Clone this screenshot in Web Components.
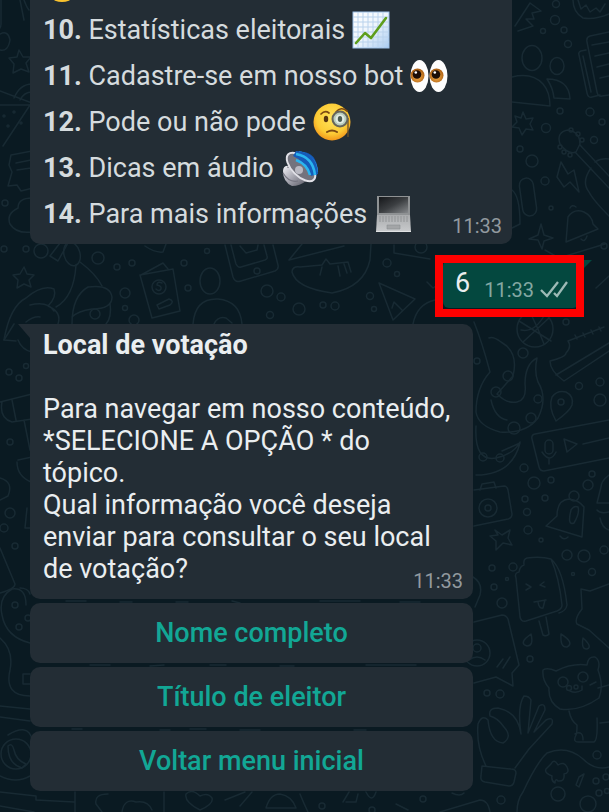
<!DOCTYPE html>
<html lang="pt-BR">
<head>
<meta charset="utf-8">
<meta name="viewport" content="width=device-width, initial-scale=1">
<title>Local de votação</title>
<style>
  body {
    margin: 0;
    background: #0a1a22;
    font-family: Roboto, "Liberation Sans", sans-serif;
    font-size: 27px;
    line-height: 32px;
    color: #eaeef0;
  }
  ul { list-style: none; margin: 0; padding: 0; }
  li {
    display: flex;
    align-items: center;
    gap: 7px;
    height: 46px;
    color: #d5dbde;
    white-space: nowrap;
  }
  p { margin: 0; padding-right: 8px; }
  p:last-child { margin-bottom: 7px; }
  h2 { margin: 0 0 32px; font-size: inherit; line-height: inherit; font-weight: 700; }
</style>
</head>
<body>
<chat-screen>
  <chat-bubble class="menu" time="11:33">
    <ul>
      <li><chat-emoji name="face"></chat-emoji></li>
      <li><span><b>10.</b> Estatísticas eleitorais</span><chat-emoji name="chart"></chat-emoji></li>
      <li><span><b>11.</b> Cadastre-se em nosso bot</span><chat-emoji name="eyes"></chat-emoji></li>
      <li><span><b>12.</b> Pode ou não pode</span><chat-emoji name="monocle"></chat-emoji></li>
      <li><span><b>13.</b> Dicas em áudio</span><chat-emoji name="speaker"></chat-emoji></li>
      <li><span><b>14.</b> Para mais informações</span><chat-emoji name="laptop"></chat-emoji></li>
    </ul>
  </chat-bubble>

  <chat-reply time="11:33" marked>6</chat-reply>

  <chat-options>
    <chat-bubble time="11:33" tail>
      <h2>Local de votação</h2>
      <p>Para navegar em nosso conteúdo, *SELECIONE A OPÇÃO * do tópico.</p>
      <p>Qual informação você deseja enviar para consultar o seu local de votação?</p>
    </chat-bubble>
    <chat-option>Nome completo</chat-option>
    <chat-option>Título de eleitor</chat-option>
    <chat-option>Voltar menu inicial</chat-option>
  </chat-options>
</chat-screen>

<script>
// ── Emoji artwork, all on a 38x38 grid ────────────────────────────────────────

const EMOJI = {
  face: `
    <circle cx="19" cy="19" r="18" fill="#f9c22e"/>
    <path d="M11 24q8 6 16 0" fill="none" stroke="#6b3d12" stroke-width="2"/>`,

  chart: `
    <defs><linearGradient id="g" x1="0" y1="0" x2="1" y2="1">
      <stop offset="0" stop-color="#fff"/><stop offset=".5" stop-color="#eef5fc"/><stop offset="1" stop-color="#a9cbf0"/>
    </linearGradient></defs>
    <rect x="1" y="1" width="36" height="36" fill="url(#g)" stroke="#9cc0e8"/>
    <path d="M6 1v36M11 1v36M16 1v36M21 1v36M26 1v36M31 1v36M1 6h36M1 11h36M1 16h36M1 21h36M1 26h36M1 31h36" stroke="#b9d2ec" fill="none"/>
    <path d="M4 32L13 22L19 27L34 7" fill="none" stroke="#5e9e1c" stroke-width="2.6" stroke-linejoin="round" stroke-linecap="round"/>`,

  eyes: `
    <defs><radialGradient id="g" cx=".5" cy=".6" r=".6">
      <stop offset="0" stop-color="#f6b04a"/><stop offset="1" stop-color="#a85b10"/>
    </radialGradient></defs>
    <ellipse cx="9.500" cy="19" rx="9" ry="16" fill="#fdfdfd"/>
    <ellipse cx="28.500" cy="19" rx="9" ry="16" fill="#fdfdfd"/>
    <circle cx="7.500" cy="18.500" r="7" fill="url(#g)"/>
    <circle cx="26.500" cy="18.500" r="7" fill="url(#g)"/>
    <circle cx="7" cy="17.500" r="4.300" fill="#1b0d07"/>
    <circle cx="26" cy="17.500" r="4.300" fill="#1b0d07"/>
    <circle cx="5.800" cy="15.500" r="1.300" fill="#fff"/>
    <circle cx="24.800" cy="15.500" r="1.300" fill="#fff"/>`,

  monocle: `
    <defs><radialGradient id="g" cx=".5" cy=".4" r=".6">
      <stop offset="0" stop-color="#ffe45c"/><stop offset=".7" stop-color="#fccb35"/><stop offset="1" stop-color="#f2971b"/>
    </radialGradient></defs>
    <circle cx="19" cy="19" r="18.500" fill="url(#g)"/>
    <path d="M8 11q4-4 8-1M23 9q5-6 11-1" fill="none" stroke="#7c4a12" stroke-width="1.700" stroke-linecap="round"/>
    <ellipse cx="13" cy="16" rx="2.200" ry="3.200" fill="#58340f"/>
    <path d="M35 15v19" stroke="#6b5228" stroke-width="1.300"/>
    <circle cx="27" cy="16" r="7.500" fill="#b9cdbd" stroke="#66655a" stroke-width="2"/>
    <circle cx="27" cy="16" r="4.500" fill="#e3ece4"/>
    <ellipse cx="27" cy="16" rx="2.200" ry="3" fill="#4b5c52"/>
    <path d="M14 29q5-3 10 0" fill="none" stroke="#7c4a12" stroke-width="2" stroke-linecap="round"/>`,

  speaker: `
    <defs><linearGradient id="g" x1="0" y1="0" x2="1" y2="1">
      <stop offset="0" stop-color="#f1f1f5"/><stop offset=".5" stop-color="#a5a5af"/><stop offset="1" stop-color="#5b5b66"/>
    </linearGradient></defs>
    <path d="M2 22q0-6 7-5l16 15q-6 5-14 5Q2 33 2 22z" fill="url(#g)"/>
    <path d="M2 24q6 10 15 8M6 18q8 0 15 10" fill="none" stroke="#74747f" stroke-width="1.200"/>
    <path d="M17 3q18-2 20 19l-3 9Q32 10 14 6z" fill="#1557b5"/>
    <path d="M14 5q18 2 19 22M18 3q17 4 18 20" fill="none" stroke="#2da9ee" stroke-width="2.200"/>
    <ellipse cx="20" cy="18" rx="9" ry="18" transform="rotate(-45 20 18)" fill="#73737d" stroke="#e0e0e6" stroke-width="2"/>
    <path d="M15 2Q36 3 37 25L30 27Q24 12 12 7z" fill="#165bb8"/>
    <path d="M15 5q17 3 19 21M15 11q11 4 14 15" fill="none" stroke="#2bb5ef" stroke-width="2.600"/>
    <circle cx="18" cy="21" r="4" fill="#b9b9c2"/>`,

  laptop: `
    <defs>
      <linearGradient id="g" x1="0" y1="0" x2="1" y2="1">
        <stop offset="0" stop-color="#15171a"/><stop offset=".5" stop-color="#3b3e41"/><stop offset="1" stop-color="#85888b"/>
      </linearGradient>
      <linearGradient id="h" x1="0" y1="0" x2="0" y2="1">
        <stop offset="0" stop-color="#a9abad"/><stop offset="1" stop-color="#c9cbcd"/>
      </linearGradient>
    </defs>
    <path d="M3 1h33v19H3z" fill="#8f9294"/>
    <path d="M5 2h29v16H5z" fill="url(#g)"/>
    <path d="M3 20h33l1 17H2z" fill="url(#h)"/>
    <path d="M5 22h29M5 24h29M5 26h29" stroke="#929597" stroke-dasharray="2 1"/>
    <path d="M13 30h13v4H13z" fill="#a3a5a7" stroke="#8b8e90" stroke-width=".6"/>
    <path d="M2 36.500h35" stroke="#e0e2e3"/>`,
};

// ── <chat-emoji name="..."> ───────────────────────────────────────────────────

class ChatEmoji extends HTMLElement {
  constructor() {
    super();
    this.attachShadow({ mode: 'open' });
  }

  connectedCallback() {
    this.shadowRoot.innerHTML = `
      <style>
        :host { display: block; flex: none; width: 38px; height: 38px; }
        svg { display: block; width: 100%; height: 100%; }
      </style>
      <svg viewBox="0 0 38 38" aria-hidden="true">${EMOJI[this.getAttribute('name')] ?? ''}</svg>`;
  }
}

// ── <chat-wallpaper> ──────────────────────────────────────────────────────────

const DOODLES = `
  <!-- left edge, top -->
  <path d="M1 0v24q0 4-3 6M0 34q8-4 10 6q-2 12-10 10M20 0l4 20M24 0q3 8 5 10"/>
  <path d="M19 50l4 7 8 0-5 6 3 9-8-3-8 4 1-9-5-6 8-1z"/>
  <path d="M0 91l32 12M0 105h32M3 146l29-44M14 98q6-14 18-14M20 100q4-8 12-8"/>
  <circle cx="4" cy="116" r="1"/><circle cx="14" cy="112" r="1"/><circle cx="8" cy="126" r="1"/><circle cx="21" cy="123" r="1"/>
  <path d="M32 151l-21 4-2 10 3 7-4 14 9-1 4 6 12-3M16 163l15-3M17 170l14-2"/>
  <circle cx="5" cy="203" r="3"/><path d="M32 198q-14 0-14 10-12 6-8 16 6 10 22 8"/>

  <!-- strip between the first two messages -->
  <circle cx="4" cy="249" r="3"/><circle cx="26" cy="249" r="3"/><circle cx="41" cy="251" r="7"/>
  <path d="M50 256l10-13 8 0-10 18z"/><ellipse cx="72" cy="254" rx="8" ry="12" transform="rotate(-15 72 254)"/>
  <path d="M76 265q-2 32-20 42M80 262q16 12 22 24M24 267l3 7 7 1-5 5 2 7-7-3-7 4 1-8-5-5 7-1z"/>
  <path d="M16 341l-12-1q6-34 22-42 16-14 28-9 3 8-6 17 14 6 10 18M30 305q18-4 24 6M26 322q8-6 14-5"/>
  <path d="M72 324q0-28 16-37 22-3 24 10 0 12-20 12-14 2-20 8M110 303q2 14-4 21"/><circle cx="95" cy="314" r="5"/>
  <circle cx="98" cy="258" r="6"/><circle cx="117" cy="267" r="3"/><circle cx="132" cy="263" r="3"/><circle cx="125" cy="293" r="5"/><circle cx="125" cy="308" r="2.500"/><circle cx="134" cy="320" r="5"/>
  <path d="M140 275l33-6 7 42-28 7zM141 275l22-12 5 6M145 246q10 7 18 6l3-8M157 305l12-6q6 2 1 6l-11 4z"/>
  <circle cx="159" cy="287" r="7"/><path d="M162 283q-5-2-5 2 5 1 4 4-2 3-5 0"/>
  <circle cx="184" cy="263" r="3"/><circle cx="188" cy="288" r="3"/><circle cx="207" cy="251" r="2.500"/>
  <ellipse cx="210" cy="281" rx="10" ry="13"/><path d="M193 324q2-26 25-25 22 2 24 25M214 324q4-8 12-6l6 5"/>
  <path d="M225 245l8 32q2 6 8 4l34-10q4-2 3-6l-5-20M231 245l5 19q2 4 5 3l24-7q3-1 2-4l-3-11M240 246l6 7 11-3 1-5"/>
  <circle cx="257" cy="271" r="3"/><circle cx="267" cy="291" r="6"/><circle cx="281" cy="297" r="4"/><circle cx="270" cy="315" r="3.500"/><circle cx="299" cy="309" r="6"/>
  <path d="M289 260l55-14M289 260l13-16M292 272q0-6 8-5l22-2 4-6 4 5 18-2 3 10M292 272q4 16 40 21 32-6 38-33l1-16M322 267l-2 8M338 266l2 10M344 264l3 9"/>
  <circle cx="323" cy="305" r="3"/><circle cx="335" cy="306" r="4"/><circle cx="387" cy="263" r="4"/><circle cx="397" cy="274" r="2.500"/><circle cx="370" cy="296" r="3.500"/><circle cx="374" cy="309" r="2.500"/>
  <path d="M394 245v8l36 6M379 283l36 16-22 21zM392 308l2-6 8 8"/><circle cx="421" cy="247" r="6"/>
  <path d="M413 324q4-20 22-24M427 282l6 6 6-4M545 250l14 8 46-14M550 268l9 26M596 288l13-12"/>

  <!-- right column, top -->
  <path d="M515 26l15-23 11 8-9 2 2 6-8 0 7 7-15 5M573 0q0 12 10 18 12 2 26-4M578 0l3 9 5-4 4 7 6-4 4 4 5-8"/>
  <circle cx="556" cy="4" r="3.500"/><circle cx="555" cy="20" r="4.500"/><circle cx="543" cy="31" r="2.500"/><circle cx="564" cy="30" r="3"/><circle cx="568" cy="44" r="3.500"/>
  <ellipse cx="532" cy="58" rx="10" ry="12.500"/><ellipse cx="557" cy="66" rx="7" ry="8.500"/>
  <path d="M512 77q20-5 31 7 7 8 7 22l-38-4M547 79q22 0 23 20l-16-1q-1-10-7-19"/>
  <path d="M609 32l-19 4q-4 1-3 6l10 50q1 5 5 4l7-1M586 50l-5 1q-3 1-2 4l8 38q1 5 5 4l8-2M583 56l8 36M592 45l17-3M595 56l14-3M597 67l12-3M600 78l9-2"/>
  <path d="M523 112l3 7 7-1-3 6 3 6-7-1-4 6-3-7-7-1 5-5-2-6 6 2z"/>
  <circle cx="546" cy="128" r="4.500"/><circle cx="560" cy="111" r="3"/><circle cx="590" cy="112" r="4"/><circle cx="602" cy="122" r="3"/><circle cx="594" cy="140" r="3.500"/><circle cx="520" cy="149" r="3"/><circle cx="532" cy="161" r="6"/><circle cx="545" cy="181" r="4"/><circle cx="551" cy="208" r="2"/>
  <path d="M560 144q-4-12 8-14 12 2 12 14l-4 8q-8 3-16-8M580 145l29 31M575 152l34 36M595 162q6-4 14-3M591 168q-10 14-2 24 4 8 20 24"/>
  <circle cx="571" cy="130" r="2"/><circle cx="578" cy="134" r="2"/><circle cx="582" cy="140" r="2"/><circle cx="560" cy="147" r="2"/><circle cx="564" cy="152" r="2"/><circle cx="570" cy="155" r="2"/>
  <path d="M561 162l-4 15 7 10 6-5 9 10-5-22-6 4z"/>
  <rect x="521" y="178" width="14" height="38" rx="7" transform="rotate(-8 528 197)"/><path d="M512 190q8 6 8 34l-8 4"/>
  <path d="M566 242l2-25q6-9 16-5 8 4 9 12l5 5zM570 208q2-4 6-1M581 239q4 4 6-3M541 224l3 11 9 3-9 3-2 8-4-9-9-1 9-4z"/><circle cx="604" cy="246" r="3"/>

  <!-- right column, middle -->
  <circle cx="535" cy="329" r="18"/><path d="M519 321l32 20M523 342l26-24M530 312q8 16 14 32M521 330q14 3 24-16"/>
  <path d="M568 341l36-14M568 341q4 6-2 12 0 4-16 8 0 10 14 20l45-30M556 375l53-32M575 335l2 4M583 333l2 4M591 330l2 4M599 327l2 4"/>
  <path d="M474 322q8 20 16 50-14 16-14 40 2 14 24 20 26 2 38-14 10-20 0-36-4-10-1-24-12 6-12 26 2 16-8 18-10 2-20-8l16-18q6-24-12-34-8-6-12-4M491 400q4 18 16 20M476 426q-2 36 20 32 18-4 24-16M476 475q36 0 44-32l-18 8"/>
  <circle cx="508" cy="376" r="5"/><circle cx="496" cy="392" r="5"/><circle cx="538" cy="399" r="4"/><circle cx="531" cy="418" r="5"/><circle cx="514" cy="428" r="6"/><circle cx="483" cy="457" r="4"/><circle cx="500" cy="458" r="4"/>
  <circle cx="523" cy="353" r="5"/><circle cx="579" cy="386" r="3.500"/><circle cx="600" cy="382" r="4"/><circle cx="600" cy="400" r="6"/><circle cx="566" cy="322" r="3"/><circle cx="477" cy="361" r="3"/>
  <path d="M556 421q-8-14-4-24 5-7 14-5 8 4 6 13-2 6-16 16z"/><circle cx="561" cy="402" r="3"/>
  <path d="M609 420l-74 14q-4 1-3 5l7 28q1 4 5 4l65-13M564 439l3 13 10-8zM583 444l26-6"/><rect x="545" y="440" width="8" height="14" rx="4"/><path d="M542 452q8 12 14 0M549 458v6"/>
  <circle cx="524" cy="468" r="4"/><circle cx="534" cy="483" r="6"/><circle cx="551" cy="480" r="3"/><circle cx="592" cy="474" r="3"/><circle cx="588" cy="485" r="5"/><circle cx="525" cy="499" r="3"/><circle cx="545" cy="498" r="3"/><circle cx="527" cy="512" r="3.500"/><circle cx="528" cy="530" r="4"/><circle cx="541" cy="540" r="2"/>
  <path d="M474 490l30-4q3 0 4 4l4 24q0 4-4 5l-34 7M480 490l2-6 12-2 2 6"/><circle cx="488" cy="508" r="9"/><circle cx="488" cy="508" r="3"/>
  <path d="M495 530l7 5 8-5-2 8 4 7-9-2-7 7 0-9-6-5 8-1zM546 526l11-10q0-16 12-17 10 1 15 8l-2 30zM560 536q4 5 8 1M571 510q-4 16 3 13 6-10 4-16-4-2-7 3"/><circle cx="574" cy="496" r="5"/>
  <path d="M609 475q-8 6-8 12l-4 16h12M597 510q3 4 12 2M600 518q2 10 9 12"/>
  <circle cx="567" cy="555" r="5"/><circle cx="584" cy="556" r="6"/><circle cx="604" cy="550" r="4"/><circle cx="592" cy="572" r="3.500"/><circle cx="492" cy="568" r="3"/><circle cx="513" cy="567" r="4"/><circle cx="494" cy="587" r="3"/><circle cx="507" cy="579" r="1.500"/><circle cx="573" cy="574" r="1.500"/><circle cx="502" cy="603" r="5"/>

  <!-- right column, bottom -->
  <path d="M516 578q-2-5 3-6 1-6 5-7-1-6 3-7 14-2 24 1 8 18 11 46 0 4-5 6l-31 10q-5 1-6-4zM551 559q12 10 16 46-1 6-8 8M526 584l5 3-5 3M544 582l-4 3 5 2M534 602l12-2M538 602q1 7 5 6l2-8M539 621l4 14q4 2 6-1l-3-17"/>
  <path d="M473 577q10 6 7 18l-5 12M609 584l-19 7-9-2 1 20q-8 10-5 15l12 6 20 18"/>
  <path d="M474 622l28-7q4 0 6 4l11 46-7 8 1 13-17-9-22 6"/><circle cx="477" cy="653" r="13"/><circle cx="477" cy="648" r="4"/><path d="M469 660q8-6 16 0M497 667l6-8M503 668l7-11"/>
  <path d="M527 646q-7-2-1-8l5-4q3 12-4 12zM561 634q-1 14 6 13 8-4-6-13zM583 638q-2 12 4 11 6-2-4-11z"/><circle cx="530" cy="659" r="3"/><circle cx="487" cy="693" r="3"/><circle cx="500" cy="694" r="4"/>
  <path d="M549 688q-7-8-6-18 4-3 13 1 16-8 31-6 1-9 8-8 6 4 3 13 6 16 1 28-20 14-39 11-12-7-11-21M569 711q2 10 8 14 0 8-1 10-4 8 4 7l14 0q4-2 3-24M575 734q8-4 8 6M598 688l11-3M600 723l9-1"/>
  <circle cx="563" cy="682" r="5"/><circle cx="583" cy="677" r="5"/><circle cx="569" cy="688" r="2.500"/><circle cx="576" cy="687" r="2"/><path d="M570 691q6 3 12-1v-4M590 685l6-3"/>
  <path d="M486 766q-10-20-8-42 4-10 10-4 2 22 15 23 10-6 1-16-6-9-14-11-2-8 8-8 20 4 23 26M521 734q-4-28 3-38 5 0 7 4l-3 33 11-27q6-4 6 4l-11 22 12-12q8-4 6 4l-23 25-14 19M482 766l29 3q5 0 5 4l-2 9q-1 4-5 4l-24-4q-5-1-4-6z"/>
  <path d="M517 812q0-12 6-20 14-30 24-39 20-8 36 6 12 12 26 8M551 764q3-6 7 1 6-4 9 2 3 6-3 7 1 8-6 7-3-3-3 2-4-2-3-7-8-3-6-7zM579 777l5-3-5 13-3-2z"/>
  <circle cx="558" cy="794" r="7"/><circle cx="588" cy="804" r="8"/><circle cx="597" cy="755" r="4"/><circle cx="596" cy="781" r="3"/><circle cx="606" cy="777" r="3"/><circle cx="599" cy="793" r="3"/><circle cx="607" cy="791" r="2.500"/><circle cx="501" cy="800" r="4"/>

  <!-- left edge, middle and bottom -->
  <path d="M4 340l10-16M18 340q4 10 14 12M0 402l32-8M2 402q-3 16 10 20l20-3M12 400l4 20M24 420l6 30M18 460l14-3M17 462q0 14 14 20M0 478q14 4 8 18l-8 4M27 508l-2 20h6M0 548l15 36q0 5-15 9M20 588q8 0 10 6"/>
  <circle cx="9" cy="372" r="3"/><circle cx="19" cy="378" r="3"/><circle cx="26" cy="366" r="2.500"/><circle cx="10" cy="442" r="3"/><circle cx="10" cy="513" r="5"/><circle cx="4" cy="528" r="4"/><circle cx="15" cy="546" r="3"/>
  <path d="M26 605q0-18-14-16-14 8-10 26 4 22 28 28M0 638q14 12 10 32-6 26 20 26M23 674l7 0M23 674v10h7M0 706l30 3M0 717l30 4M8 735q20-12 24 4M0 776q16 8 30 0"/>
  <circle cx="15" cy="605" r="3"/><circle cx="19" cy="627" r="3"/><circle cx="28" cy="618" r="3"/><circle cx="16" cy="754" r="15"/><path d="M8 746q4-4 6 4 2 10 12 14l-4 4Q8 764 8 746"/>
  <path d="M0 792l36 4v4l38 2M0 806l34 6M75 792v20M108 794q-14 0-12 10l6 8M122 812q2-14 14-10 12-2 16 8M164 792v20M200 810q-16-8-14-16 6-6 14 2 8-4 12 2 2 6-12 12zM225 800l20-8M240 806l12-14M266 808q4-14 14-14 12 2 16 14zM300 794q4 10 8 18"/>
  <path d="M343 802l6-10M346 802h10l2-8M366 792q6 12 10 0M396 804l12 6M440 812l40-12q8 0 10 12M452 793q8 4 12 0"/><circle cx="322" cy="806" r="3"/><circle cx="423" cy="799" r="3"/><circle cx="372" cy="810" r="3"/>
  <path d="M66 601h20M120 602h12M176 602h12M232 601l8 2M320 601h40M400 602h20M90 665h20M150 666l14-1M210 665h16M280 666h14M366 665h50M72 729h10M160 730h10M190 729h16M240 730h20M354 730h12"/>`;

class ChatWallpaper extends HTMLElement {
  constructor() {
    super();
    this.attachShadow({ mode: 'open' }).innerHTML = `
      <style>
        :host { display: block; overflow: hidden; }
        svg { display: block; width: 100%; height: 100%; }
        g { fill: none; stroke: #182a33; stroke-width: 1.5; stroke-linejoin: round; stroke-linecap: round; }
      </style>
      <svg viewBox="0 0 609 812" preserveAspectRatio="xMidYMin slice" aria-hidden="true"><g>${DOODLES}</g></svg>`;
  }
}

// ── <chat-screen> ─────────────────────────────────────────────────────────────

class ChatScreen extends HTMLElement {
  constructor() {
    super();
    this.attachShadow({ mode: 'open' }).innerHTML = `
      <style>
        :host { display: block; position: relative; min-height: 100vh; overflow: hidden; }
        chat-wallpaper { position: absolute; inset: 0; }
        main {
          position: relative;
          display: flex;
          flex-direction: column;
          align-items: flex-start;
          gap: 16px;
          padding: 0 30px 20px;
        }
        /* the menu is scrolled: its earlier lines are above the screen */
        ::slotted(.menu) { width: 100%; max-width: 482px; margin-top: -44px; }
      </style>
      <chat-wallpaper></chat-wallpaper>
      <main><slot></slot></main>`;
  }
}

// ── <chat-bubble time="..." tail> ─────────────────────────────────────────────

class ChatBubble extends HTMLElement {
  constructor() {
    super();
    this.attachShadow({ mode: 'open' }).innerHTML = `
      <style>
        :host {
          display: grid;
          position: relative;
          box-sizing: border-box;
          padding: 5px 10px 7px 13px;
          border-radius: 10px;
          background: #232d35;
        }
        :host([tail]) { border-top-left-radius: 0; }
        :host([tail])::before {
          content: "";
          position: absolute;
          top: 0;
          right: 100%;
          width: 12px;
          height: 14px;
          background: inherit;
          clip-path: polygon(0 0, 100% 0, 100% 100%);
        }
        .body, time { grid-area: 1 / 1; }
        time {
          place-self: end;
          font-size: 20px;
          line-height: 22px;
          color: #929a9f;
        }
      </style>
      <div class="body"><slot></slot></div>
      <time></time>`;
  }

  connectedCallback() {
    this.shadowRoot.querySelector('time').textContent = this.getAttribute('time') ?? '';
  }
}

// ── <chat-reply time="..." marked> ────────────────────────────────────────────

class ChatReply extends HTMLElement {
  constructor() {
    super();
    this.attachShadow({ mode: 'open' }).innerHTML = `
      <style>
        :host {
          display: flex;
          position: relative;
          align-self: flex-end;
          box-sizing: border-box;
          height: 48px;
          padding: 7px 11px 7px 12px;
          border-radius: 6px 0 6px 6px;
          background: #04483f;
        }
        :host::before, :host(*)::before {
          content: "";
          position: absolute;
          top: 0;
          left: 100%;
          width: 13px;
          height: 13px;
          background: inherit;
          clip-path: polygon(0 0, 100% 0, 0 100%);
        }
        :host([marked])::after {
          content: "";
          position: absolute;
          inset: -5px -5px -9px -8px;
          border: 8px solid #fe0000;
        }
        .meta {
          display: flex;
          align-items: center;
          align-self: flex-end;
          gap: 6px;
          margin-left: 14px;
          font-size: 20px;
          line-height: 22px;
          color: #84a8a3;
        }
        svg { width: 28px; height: 18px; }
      </style>
      <slot></slot>
      <span class="meta">
        <time></time>
        <svg viewBox="0 0 28 18" fill="none" stroke="#9dbab6" stroke-width="2.300" role="img" aria-label="Entregue">
          <path d="M1 9l6 6L18 1M14 12l3 3L27 1"/>
        </svg>
      </span>`;
  }

  connectedCallback() {
    this.shadowRoot.querySelector('time').textContent = this.getAttribute('time') ?? '';
  }
}

// ── <chat-options> / <chat-option> ────────────────────────────────────────────

class ChatOptions extends HTMLElement {
  constructor() {
    super();
    this.attachShadow({ mode: 'open' }).innerHTML = `
      <style>
        :host { display: flex; flex-direction: column; gap: 4px; width: 100%; max-width: 443px; }
      </style>
      <slot></slot>`;
  }
}

class ChatOption extends HTMLElement {
  constructor() {
    super();
    this.attachShadow({ mode: 'open' }).innerHTML = `
      <style>
        :host { display: block; }
        button {
          display: block;
          width: 100%;
          height: 60px;
          padding: 0;
          border: 0;
          border-radius: 10px;
          background: #232d35;
          color: #12a795;
          font: 500 27px/32px Roboto, "Liberation Sans", sans-serif;
          cursor: pointer;
        }
      </style>
      <button type="button"><slot></slot></button>`;
  }
}

// ── Registration ──────────────────────────────────────────────────────────────

customElements.define('chat-emoji', ChatEmoji);
customElements.define('chat-wallpaper', ChatWallpaper);
customElements.define('chat-screen', ChatScreen);
customElements.define('chat-bubble', ChatBubble);
customElements.define('chat-reply', ChatReply);
customElements.define('chat-options', ChatOptions);
customElements.define('chat-option', ChatOption);
</script>
</body>
</html>
